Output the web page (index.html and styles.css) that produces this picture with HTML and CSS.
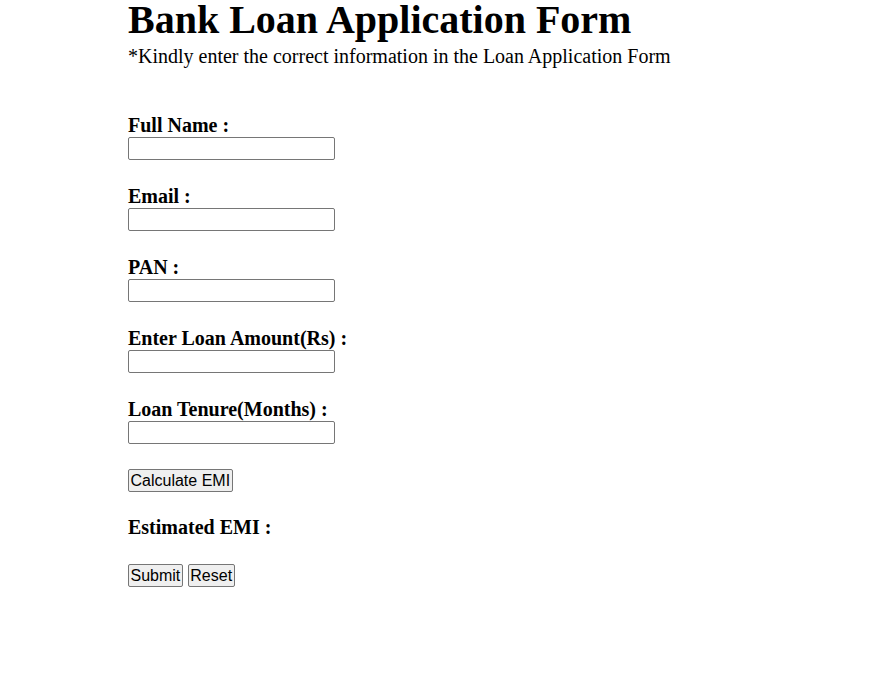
FILE: index.html
```html
<!DOCTYPE html>
<html lang="en">
<head>
<meta charset="utf-8">
<title>Bank Loan Application Form</title>
<link rel="stylesheet" href="styles.css">
</head>
<body>
<div class="page">
  <h1 class="title">Bank Loan Application Form</h1>
  <p class="note">*Kindly enter the correct information in the Loan Application Form</p>
  <form class="form">
    <div class="field">
      <label class="label" for="name">Full Name :</label>
      <input class="input" id="name" type="text">
    </div>
    <div class="field">
      <label class="label" for="email">Email :</label>
      <input class="input" id="email" type="text">
    </div>
    <div class="field">
      <label class="label" for="pan">PAN :</label>
      <input class="input" id="pan" type="text">
    </div>
    <div class="field">
      <label class="label" for="amount">Enter Loan Amount(Rs) :</label>
      <input class="input" id="amount" type="text">
    </div>
    <div class="field">
      <label class="label" for="tenure">Loan Tenure(Months) :</label>
      <input class="input" id="tenure" type="text">
    </div>
    <div class="actions">
      <button class="btn" type="button">Calculate EMI</button>
    </div>
    <div class="result">Estimated EMI :</div>
    <div class="actions">
      <button class="btn" type="submit">Submit</button>
      <button class="btn" type="reset">Reset</button>
    </div>
  </form>
</div>
</body>
</html>
```
FILE: styles.css
```css
html, body {
  margin: 0;
  padding: 0;
  background: #ffffff;
}
body {
  font-family: "Liberation Serif", "Times New Roman", serif;
  color: #000000;
}
.page {
  padding-left: 128px;
  padding-top: 2px;
}
.title {
  margin: 0;
  font-size: 40px;
  line-height: 36px;
  font-weight: bold;
}
.note {
  margin: 7px 0 0 0;
  font-size: 20px;
  line-height: 22px;
}
.form {
  display: flex;
  flex-direction: column;
  align-items: flex-start;
  gap: 25px;
  margin-top: 47px;
}
.field {
  display: flex;
  flex-direction: column;
  align-items: flex-start;
  gap: 1px;
}
.label,
.result {
  font-size: 20px;
  line-height: 22px;
  font-weight: bold;
}
.result {
  margin-top: -1px;
  margin-bottom: 1px;
}
.input {
  box-sizing: border-box;
  width: 207px;
  height: 23px;
  margin: 0;
  padding: 1px 2px;
  border: 1px solid #767676;
  border-radius: 2px;
  background: #ffffff;
  font-family: "Liberation Sans", Arial, sans-serif;
  font-size: 16px;
}
.actions {
  display: flex;
  gap: 5px;
}
.btn {
  box-sizing: border-box;
  height: 23px;
  margin: 0;
  padding: 0 1.5px;
  border: 1px solid #767676;
  border-radius: 2px;
  background: #efefef;
  color: #000000;
  font-family: "Liberation Sans", Arial, sans-serif;
  font-size: 16px;
  line-height: 19px;
}
```
